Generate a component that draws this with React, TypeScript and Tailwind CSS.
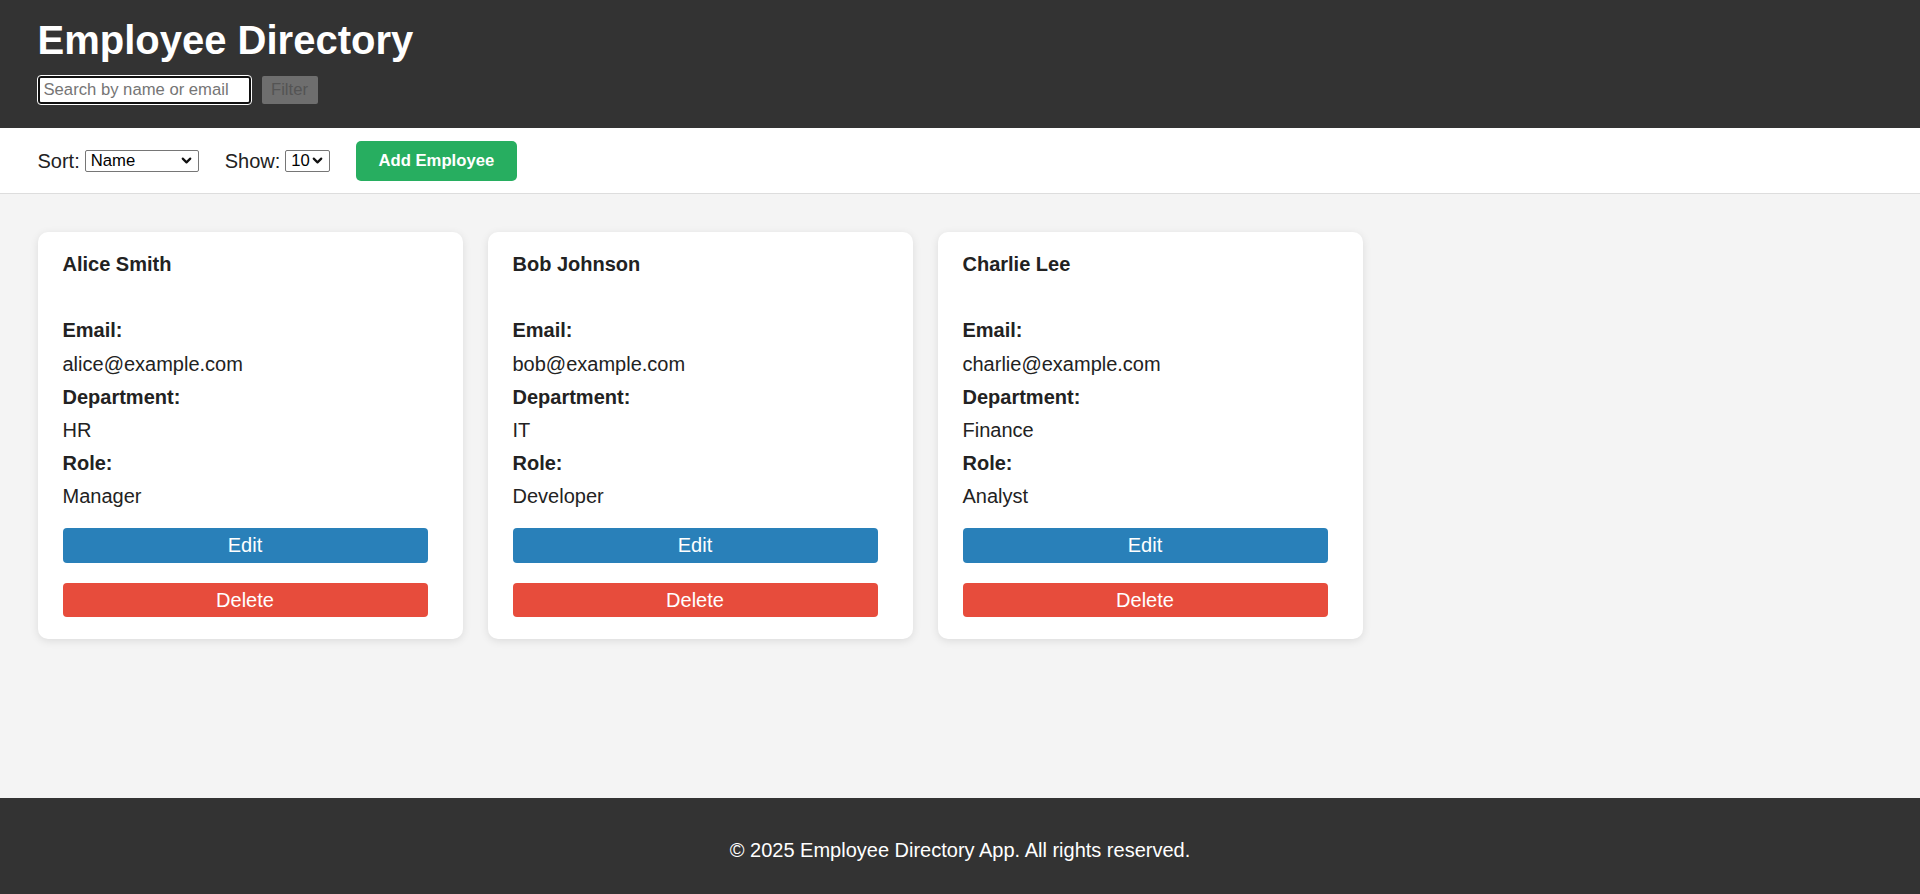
import { ChevronDown } from "lucide-react";

type Employee = {
    name: string;
    email: string;
    department: string;
    role: string;
};

const employees: Employee[] = [
    { name: "Alice Smith", email: "alice@example.com", department: "HR", role: "Manager" },
    { name: "Bob Johnson", email: "bob@example.com", department: "IT", role: "Developer" },
    { name: "Charlie Lee", email: "charlie@example.com", department: "Finance", role: "Analyst" },
];

const FakeSelect = ({ value, width }: { value: string; width: string }) => (
    <div
        className={`${width} h-[22px] flex items-center justify-between pl-[5px] pr-[4px] bg-white border border-[#767676] rounded-[2px] text-[16.67px] text-black`}
    >
        <span>{value}</span>
        <ChevronDown size={15} strokeWidth={3.5} className="text-[#111]" />
    </div>
);

const EmployeeCard = ({ emp }: { emp: Employee }) => (
    <div className="w-[425px] bg-white rounded-[10px] shadow-[0_2px_8px_rgba(0,0,0,0.1)] px-[25px] pt-[16.5px] pb-[22.5px] text-[20px] text-[#222]">
        <div className="h-[33.2px] leading-[33.2px] font-bold">{emp.name}</div>
        <div className="h-[33.2px]" />
        <div className="h-[33.2px] leading-[33.2px] font-bold">Email:</div>
        <div className="h-[33.2px] leading-[33.2px]">{emp.email}</div>
        <div className="h-[33.2px] leading-[33.2px] font-bold">Department:</div>
        <div className="h-[33.2px] leading-[33.2px]">{emp.department}</div>
        <div className="h-[33.2px] leading-[33.2px] font-bold">Role:</div>
        <div className="h-[33.2px] leading-[33.2px]">{emp.role}</div>
        <button className="block mt-[14.7px] w-[365px] h-[34.4px] bg-[#2980b9] text-white rounded-[4px] text-[20px]">
            Edit
        </button>
        <button className="block mt-[20px] w-[365px] h-[34px] bg-[#e74c3c] text-white rounded-[4px] text-[20px]">
            Delete
        </button>
    </div>
);

export default function App() {
    return (
        <div className="min-h-screen flex flex-col bg-[#f4f4f4] font-['Liberation_Sans',Arial,sans-serif]">
            <header className="bg-[#333] text-white px-[37.5px] pt-[17px] pb-[24px]">
                <h1 className="text-[40px] leading-[46px] font-bold">Employee Directory</h1>
                <div className="mt-[12.5px] flex items-center gap-[11px]">
                    <input
                        type="text"
                        placeholder="Search by name or email"
                        className="w-[213px] h-[28px] px-[4px] bg-white text-black border-2 border-[#111] rounded-[3px] outline outline-1 outline-white text-[16.67px] placeholder-[#757575]"
                    />
                    <button
                        disabled
                        className="w-[56px] h-[28px] bg-[#6e6e6e] text-[#545454] rounded-[2px] text-[16.67px]"
                    >
                        Filter
                    </button>
                </div>
            </header>

            <div className="h-[66px] bg-white border-b border-[#ddd] px-[37.5px] pt-[1px] flex items-center text-[20px] text-[#222]">
                <div className="flex items-center gap-[5px]">
                    <span>Sort:</span>
                    <FakeSelect value="Name" width="w-[114px]" />
                </div>
                <div className="flex items-center gap-[5px] ml-[26px]">
                    <span>Show:</span>
                    <FakeSelect value="10" width="w-[45px]" />
                </div>
                <button className="ml-[25.5px] w-[161px] h-[40px] bg-[#27ae60] text-white font-bold rounded-[5px] text-[16.67px]">
                    Add Employee
                </button>
            </div>

            <main className="flex-1 px-[37.5px] pt-[38px] pb-[37.5px] flex flex-wrap items-start gap-[25px]">
                {employees.map((emp) => (
                    <EmployeeCard key={emp.email} emp={emp} />
                ))}
            </main>

            <footer className="h-[96px] bg-[#333] text-white text-[20px] text-center pt-[37px]">
                © 2025 Employee Directory App. All rights reserved.
            </footer>
        </div>
    );
}
